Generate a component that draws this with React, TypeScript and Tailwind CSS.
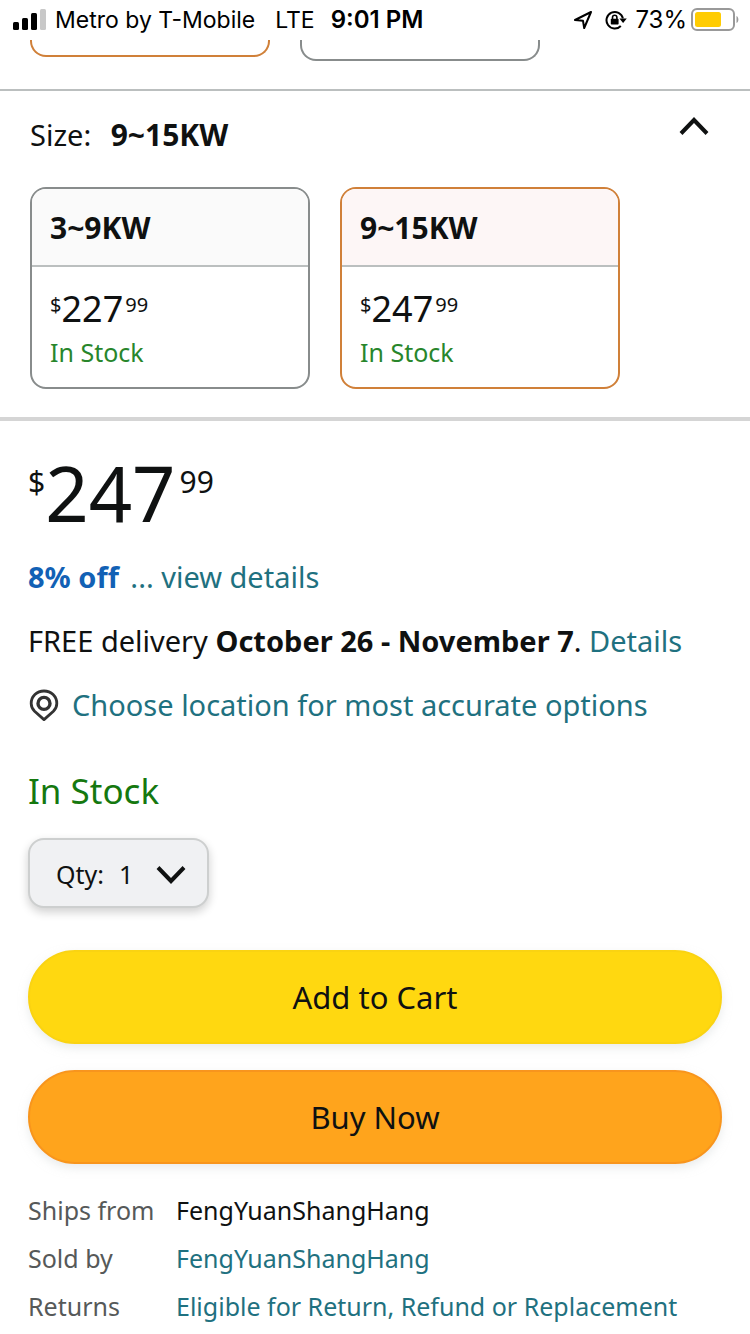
import { useState } from "react";
import clsx from "clsx";

type SizeOption = {
  name: string;
  dollars: string;
  cents: string;
};

const sizes: SizeOption[] = [
  { name: "3~9KW", dollars: "227", cents: "99" },
  { name: "9~15KW", dollars: "247", cents: "99" },
];

const sellerInfo = [
  { label: "Ships from", value: "FengYuanShangHang", link: false },
  { label: "Sold by", value: "FengYuanShangHang", link: true },
  { label: "Returns", value: "Eligible for Return, Refund or Replacement", link: true },
];

function SignalIcon() {
  return (
    <svg width="34" height="22" viewBox="0 0 34 22" className="shrink-0" aria-hidden>
      <rect x="0" y="13" width="6" height="8" rx="1.5" />
      <rect x="9" y="9" width="6" height="12" rx="1.5" />
      <rect x="18" y="4" width="6" height="17" rx="1.5" />
      <rect x="27" y="0" width="6" height="21" rx="1.5" fill="#c8c8c8" />
    </svg>
  );
}

function LocationArrow() {
  return (
    <svg width="20" height="20" viewBox="0 0 20 20" fill="none" stroke="#000" strokeWidth="2" strokeLinejoin="round" aria-hidden>
      <path d="M18 2 L2 10 L10 10.8 L11.2 18 Z" />
    </svg>
  );
}

function RotationLock() {
  return (
    <svg width="22" height="20" viewBox="0 0 22 20" fill="none" stroke="#000" aria-hidden>
      <path d="M17.9 8.4 A8.3 8.3 0 1 0 15.8 16" strokeWidth="2" />
      <path d="M14.4 8.4 H21.8 L18.1 13 Z" fill="#000" stroke="none" />
      <rect x="5.8" y="8.8" width="7.8" height="5.8" rx="0.8" fill="#000" stroke="none" />
      <path d="M7.5 9.2 V7.4 A2.2 2.2 0 0 1 11.9 7.4 V9.2" strokeWidth="1.6" />
    </svg>
  );
}

function Battery() {
  return (
    <svg width="49" height="24" viewBox="0 0 49 24" fill="none" aria-hidden>
      <rect x="1" y="1" width="42" height="21" rx="5" stroke="#999" strokeWidth="2" />
      <rect x="4" y="4" width="26" height="15" rx="2.5" fill="#ffcc02" />
      <path d="M45.5 8 C48 9 48 14 45.5 15 Z" fill="#999" />
    </svg>
  );
}

function PinIcon() {
  return (
    <svg width="31" height="34" viewBox="0 0 31 34" fill="none" stroke="#333" className="shrink-0" aria-hidden>
      <path d="M16 31.6 L6.6 23.2 C4.2 20.8 3.2 18.4 3.2 15.4 C3.2 8.4 8.8 3 16 3 C23.2 3 28.8 8.4 28.8 15.4 C28.8 18.4 27.8 20.8 25.4 23.2 Z" strokeWidth="2.8" strokeLinejoin="round" />
      <circle cx="16" cy="15.4" r="6" strokeWidth="3.4" />
    </svg>
  );
}

function Chevron({ up = false }: { up?: boolean }) {
  return (
    <svg width="30" height="20" viewBox="0 0 30 20" fill="none" stroke="#0f1111" strokeWidth="4" aria-hidden>
      <path d={up ? "M2 17.5 L15 4 L28 17.5" : "M2 2.5 L15 16 L28 2.5"} />
    </svg>
  );
}

function StatusBar() {
  return (
    <header className="flex h-10 items-center justify-between pl-[13px] pr-[10px] font-['Inter',sans-serif] text-2xl text-black">
      <div className="flex items-center">
        <SignalIcon />
        <span className="ml-2 text-[23px]">Metro by T-Mobile</span>
        <span className="ml-5 text-[23px]">LTE</span>
        <span className="ml-4 font-semibold">9:01 PM</span>
      </div>
      <div className="flex items-center">
        <LocationArrow />
        <span className="ml-3">
          <RotationLock />
        </span>
        <span className="ml-2 mr-1">73%</span>
        <Battery />
      </div>
    </header>
  );
}

function SizeCard({ size, selected, onSelect }: { size: SizeOption; selected: boolean; onSelect: () => void }) {
  return (
    <button
      type="button"
      aria-pressed={selected}
      onClick={onSelect}
      className={clsx(
        "w-[280px] overflow-hidden rounded-2xl border-2 text-left",
        selected ? "border-[#d08039]" : "border-[#888c8c]",
      )}
    >
      <span
        className={clsx(
          "flex h-[78px] items-center border-b-2 border-[#bbbfbf] px-[18px] text-[30px] font-bold",
          selected ? "bg-[#fdf6f6]" : "bg-[#fafafa]",
        )}
      >
        {size.name}
      </span>
      <span className="flex h-[120px] flex-col px-[18px] pt-5">
        <span className="flex items-start">
          <span className="text-xl leading-9">$</span>
          <span className="text-4xl leading-[44px]">{size.dollars}</span>
          <span className="ml-0.5 text-xl leading-9">{size.cents}</span>
        </span>
        <span className="text-[25px] leading-[42px] text-[#28862b]">In Stock</span>
      </span>
    </button>
  );
}

export default function App() {
  const [selected, setSelected] = useState("9~15KW");
  const [quantity, setQuantity] = useState("1");

  return (
    <div className="min-h-screen bg-white font-['Noto_Sans',sans-serif] text-[#0f1111]">
      <StatusBar />

      {/* lower edges of the option row scrolled under the status bar */}
      <div className="flex h-[51px] items-start gap-[30px] border-b-2 border-[#bbbfbf] px-[30px]">
        <div className="h-[17px] w-60 rounded-b-2xl border-2 border-t-0 border-[#d08039]" />
        <div className="h-[21px] w-60 rounded-b-2xl border-2 border-t-0 border-[#888c8c]" />
      </div>

      <section className="border-b-4 border-[#d5d5d5] px-[30px] pb-7">
        <div className="flex h-24 items-center justify-between pb-2.5 pr-[11px]">
          <h2 className="text-[29px]">
            Size: <span className="ml-3 text-[30px] font-bold">{selected}</span>
          </h2>
          <button type="button" aria-label="Collapse sizes" className="mb-4">
            <Chevron up />
          </button>
        </div>
        <div className="flex gap-[30px]">
          {sizes.map((size) => (
            <SizeCard
              key={size.name}
              size={size}
              selected={size.name === selected}
              onSelect={() => setSelected(size.name)}
            />
          ))}
        </div>
      </section>

      <main className="px-7 pt-9">
        <div className="flex items-start">
          <span className="text-[30px] leading-[50px]">$</span>
          <span className="text-[76px] leading-[72px]">247</span>
          <span className="ml-1 text-[30px] leading-[50px]">99</span>
        </div>

        <p className="mt-7 text-[29px] leading-10">
          <span className="mr-1 font-bold text-[#1261b5]">8% off</span>{" "}
          <a href="#offer" className="text-[#1f7180]">
            ... view details
          </a>
        </p>
        <p className="mt-6 text-[29px] leading-10">
          FREE delivery <b>October 26 - November 7</b>.{" "}
          <a href="#delivery" className="text-[#1f7180]">
            Details
          </a>
        </p>
        <a href="#location" className="mt-6 flex items-center gap-[13px] text-[29px] leading-10 text-[#1f7180]">
          <PinIcon />
          Choose location for most accurate options
        </a>

        <p className="mt-[41px] text-[35px] leading-[50px] text-[#15780f]">In Stock</p>

        <label className="relative mt-[22px] flex h-[70px] w-[181px] items-center rounded-2xl border-2 border-[#cdcfcf] bg-[#f0f1f3] pl-[26px] pt-1 text-[25px] shadow-[0_4px_10px_rgba(15,17,17,0.2)]">
          Qty:
          <select
            value={quantity}
            onChange={(e) => setQuantity(e.target.value)}
            className="absolute inset-0 appearance-none rounded-2xl pl-[89px] pt-1"
          >
            <option>1</option>
            <option>2</option>
            <option>3</option>
          </select>
          <span className="pointer-events-none absolute right-[21px]">
            <Chevron />
          </span>
        </label>

        <button
          type="button"
          className="mt-[42px] h-[94px] w-full rounded-full border-2 border-[#fad312] bg-[#ffd810] text-[31px] shadow-[0_4px_10px_rgba(213,217,217,0.5)]"
        >
          Add to Cart
        </button>
        <button
          type="button"
          className="mt-[26px] h-[94px] w-full rounded-full border-2 border-[#f8951d] bg-[#ffa41c] text-[31px] shadow-[0_4px_10px_rgba(213,217,217,0.5)]"
        >
          Buy Now
        </button>

        <dl className="mt-[22px] grid grid-cols-[148px_1fr] text-[25px] leading-[48px]">
          {sellerInfo.map(({ label, value, link }) => (
            <div key={label} className="contents">
              <dt className="text-[#565959]">{label}</dt>
              <dd className="whitespace-nowrap">
                {link ? (
                  <a href="#seller" className="text-[#1f7180]">
                    {value}
                  </a>
                ) : (
                  value
                )}
              </dd>
            </div>
          ))}
        </dl>
      </main>
    </div>
  );
}
